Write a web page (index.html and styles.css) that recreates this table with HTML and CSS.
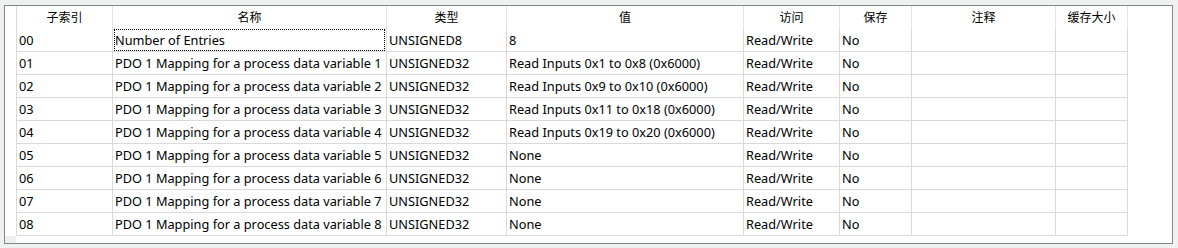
FILE: index.html
```html
<!DOCTYPE html>
<html lang="zh">
<head>
<meta charset="utf-8">
<link rel="stylesheet" href="styles.css">
</head>
<body>
<div class="frame">
  <div class="grid">
    <div class="h lead"></div>
    <div class="h">子索引</div>
    <div class="h">名称</div>
    <div class="h">类型</div>
    <div class="h">值</div>
    <div class="h">访问</div>
    <div class="h">保存</div>
    <div class="h">注释</div>
    <div class="h">缓存大小</div>

    <div class="lead"></div><div class="c">00</div><div class="c focus">Number of Entries</div><div class="c">UNSIGNED8</div><div class="c">8</div><div class="c">Read/Write</div><div class="c">No</div><div class="c"></div><div class="c"></div>
    <div class="lead"></div><div class="c">01</div><div class="c">PDO 1 Mapping for a process data variable 1</div><div class="c">UNSIGNED32</div><div class="c">Read Inputs 0x1 to 0x8 (0x6000)</div><div class="c">Read/Write</div><div class="c">No</div><div class="c"></div><div class="c"></div>
    <div class="lead"></div><div class="c">02</div><div class="c">PDO 1 Mapping for a process data variable 2</div><div class="c">UNSIGNED32</div><div class="c">Read Inputs 0x9 to 0x10 (0x6000)</div><div class="c">Read/Write</div><div class="c">No</div><div class="c"></div><div class="c"></div>
    <div class="lead"></div><div class="c">03</div><div class="c">PDO 1 Mapping for a process data variable 3</div><div class="c">UNSIGNED32</div><div class="c">Read Inputs 0x11 to 0x18 (0x6000)</div><div class="c">Read/Write</div><div class="c">No</div><div class="c"></div><div class="c"></div>
    <div class="lead"></div><div class="c">04</div><div class="c">PDO 1 Mapping for a process data variable 4</div><div class="c">UNSIGNED32</div><div class="c">Read Inputs 0x19 to 0x20 (0x6000)</div><div class="c">Read/Write</div><div class="c">No</div><div class="c"></div><div class="c"></div>
    <div class="lead"></div><div class="c">05</div><div class="c">PDO 1 Mapping for a process data variable 5</div><div class="c">UNSIGNED32</div><div class="c">None</div><div class="c">Read/Write</div><div class="c">No</div><div class="c"></div><div class="c"></div>
    <div class="lead"></div><div class="c">06</div><div class="c">PDO 1 Mapping for a process data variable 6</div><div class="c">UNSIGNED32</div><div class="c">None</div><div class="c">Read/Write</div><div class="c">No</div><div class="c"></div><div class="c"></div>
    <div class="lead"></div><div class="c">07</div><div class="c">PDO 1 Mapping for a process data variable 7</div><div class="c">UNSIGNED32</div><div class="c">None</div><div class="c">Read/Write</div><div class="c">No</div><div class="c"></div><div class="c"></div>
    <div class="lead"></div><div class="c">08</div><div class="c">PDO 1 Mapping for a process data variable 8</div><div class="c">UNSIGNED32</div><div class="c">None</div><div class="c">Read/Write</div><div class="c">No</div><div class="c"></div><div class="c"></div>
  </div>
  <div class="foot"><div class="corner"></div></div>
</div>
</body>
</html>
```
FILE: styles.css
```css
html, body {
  margin: 0;
  padding: 0;
  background: #f0f0f0;
}
body {
  padding: 5px 0 0 4px;
  font-family: "Noto Sans", "Noto Sans CJK SC", sans-serif;
  font-size: 12.75px;
  color: #000;
}
.frame {
  box-sizing: border-box;
  width: 1169px;
  height: 239px;
  border: 1px solid #828790;
  background: #fff;
}
.grid {
  display: grid;
  grid-template-columns: 12px 96px 274px 120px 237px 96px 72px 144px 72px;
  grid-auto-rows: 23px;
}
.grid > div {
  box-sizing: border-box;
  white-space: nowrap;
  overflow: hidden;
}
.h {
  border-right: 1px solid #e5e5e5;
  text-align: center;
  line-height: 22px;
  font-family: "Noto Sans CJK SC", sans-serif;
  font-size: 12px;
}
.lead {
  border-right: 1px solid #dadada;
}
.h.lead {
  border-right-color: #dadada;
}
.c {
  border-right: 1px solid #dadada;
  border-bottom: 1px solid #dadada;
  padding-left: 2px;
  line-height: 23px;
}
.focus {
  position: relative;
}
.focus::after {
  content: "";
  position: absolute;
  left: 1px;
  right: 1px;
  top: 0;
  bottom: 0;
  border: 1px dotted #000;
}
.foot {
  height: 7px;
  display: flex;
}
.corner {
  width: 11px;
  height: 7px;
  background: #f0f0f0;
}
```
